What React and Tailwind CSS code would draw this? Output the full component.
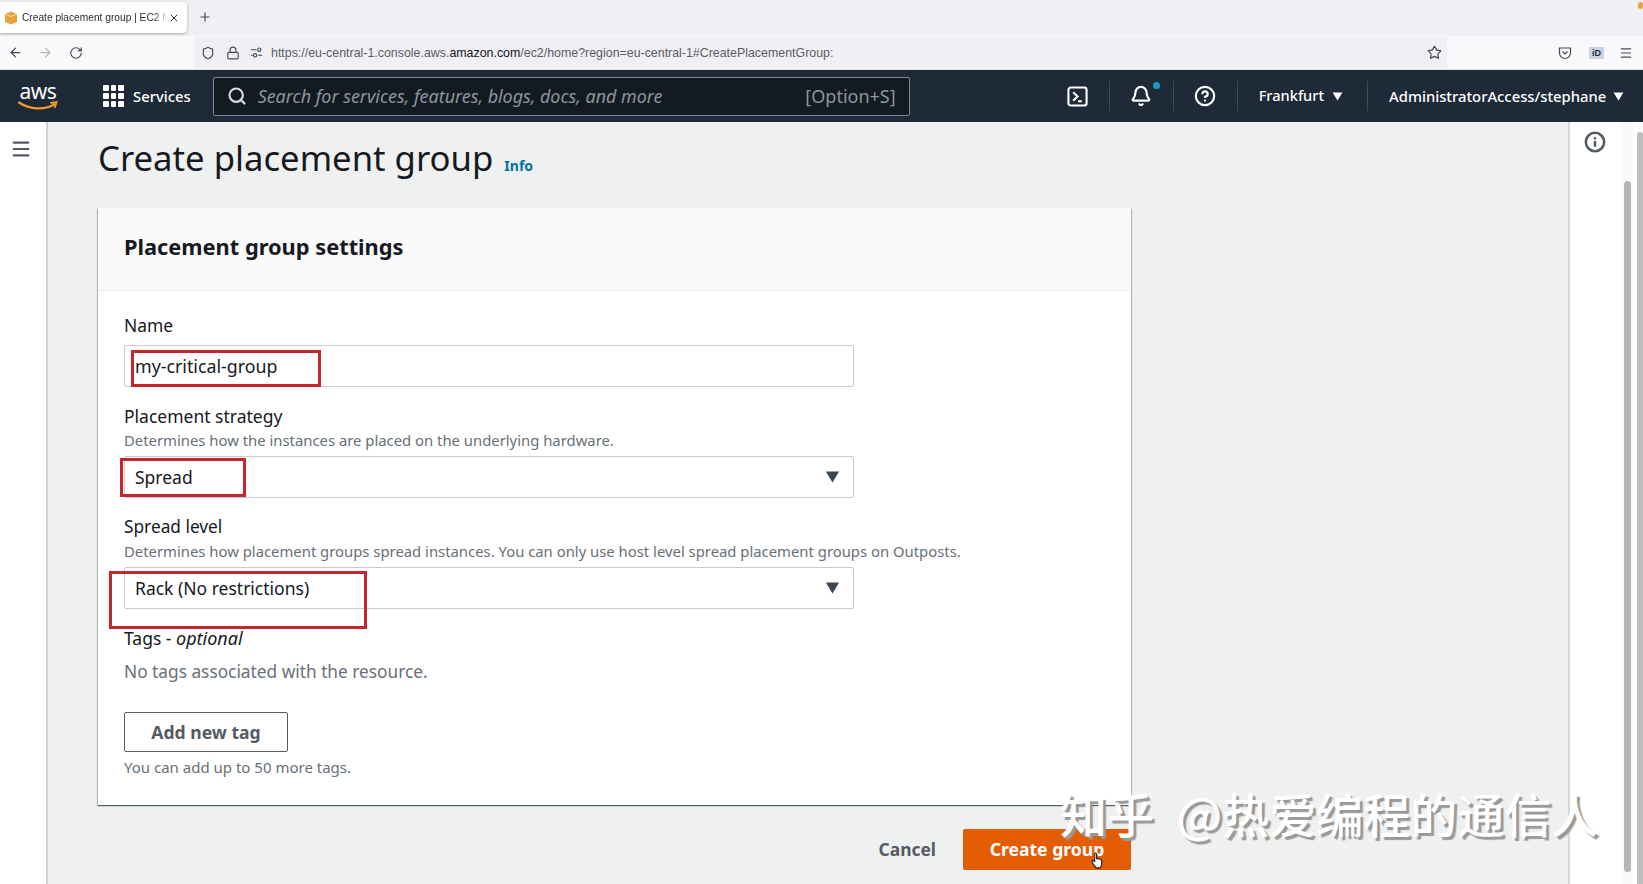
import { ArrowLeft, ArrowRight, RotateCw, Shield, Lock, Star, Search, Bell, CircleHelp, Menu, Info, Plus, X } from "lucide-react";

const Caret = ({ className }) => (
  <svg viewBox="0 0 12 10" className={className}>
    <path d="M0.5 0.5h11L6 9.5z" fill="currentColor" />
  </svg>
);

const Divider = () => <div className="w-px h-[30px] bg-[#414c59]" />;

const RedBox = ({ className }) => (
  <div className={`absolute border-[3px] border-[#c4262e] pointer-events-none ${className}`} />
);

const SelectBox = ({ value, children }) => (
  <div className="relative mt-[5px] h-[42px] border border-[#c8ccce] rounded-[2px] flex items-center justify-between pl-[10px] pr-[13px] text-[17.5px] text-[#16191f]">
    <span>{value}</span>
    <Caret className="w-[15px] h-[12px] text-[#3d4650]" />
    {children}
  </div>
);

export default function App() {
  return (
    <div className="h-screen w-full overflow-hidden flex flex-col bg-white font-['Noto_Sans',sans-serif] relative">
      {/* browser tabs */}
      <div className="h-[36px] bg-[#f0f0f4] flex items-start pt-[2px] relative">
        <div className="w-[187px] h-[31px] bg-white rounded-r-[4px] shadow-[0_1px_3px_rgba(0,0,0,0.3)] flex items-center pl-[4px] pr-[9px] font-['Liberation_Sans',sans-serif]">
          <svg viewBox="0 0 14 14" className="w-[14px] h-[14px] shrink-0">
            <path d="M1 3l6-2.500L13 3v8l-6 2.500L1 11z" fill="#e9a23b" />
            <path d="M1 3l6 2.500L13 3" fill="none" stroke="#fbe0a8" strokeWidth="1" />
          </svg>
          <span className="ml-[4px] text-[10.2px] text-[#2b2a33] whitespace-nowrap w-[146px] [mask-image:linear-gradient(to_right,black_90%,transparent)]">
            Create placement group | EC2 M
          </span>
          <X className="w-[12px] h-[12px] text-[#2b2a33] shrink-0" />
        </div>
        <Plus className="w-[14px] h-[14px] ml-[11px] mt-[8px] text-[#4a4a52]" />
        <div className="absolute right-0 top-[2px] w-[5px] h-[7px] bg-[#e8a33d] rounded-full" />
      </div>

      {/* browser address bar */}
      <div className="h-[34px] bg-[#f9f9fb] flex items-center border-b border-[#e0e0e6] relative">
        <ArrowLeft className="w-[15px] h-[15px] ml-[8px] text-[#4a4a52]" />
        <ArrowRight className="w-[15px] h-[15px] ml-[15px] text-[#b4b4ba]" />
        <RotateCw className="w-[14px] h-[14px] ml-[16px] text-[#4a4a52]" />
        <div className="absolute left-[194px] top-[1px] w-[1253px] h-[31px] bg-[#f0f0f4] flex items-center pl-[7px]">
          <Shield className="w-[14px] h-[14px] text-[#4a4a52]" />
          <Lock className="w-[14px] h-[14px] ml-[11px] text-[#4a4a52]" />
          <svg viewBox="0 0 14 14" className="w-[13px] h-[13px] ml-[10px] text-[#4a4a52]" fill="none" stroke="currentColor" strokeWidth="1.200">
            <path d="M1 4h6M1 10h2" />
            <circle cx="10" cy="4" r="1.800" />
            <circle cx="5.500" cy="10" r="1.800" />
            <path d="M9 10h4" />
          </svg>
          <span className="ml-[8px] mt-px text-[12.4px] text-[#5b5b66] whitespace-nowrap font-['Liberation_Sans',sans-serif]">
            https://eu-central-1.console.aws.<span className="text-[#15141a]">amazon.com</span>/ec2/home?region=eu-central-1#CreatePlacementGroup:
          </span>
          <Star className="w-[15px] h-[15px] ml-auto mr-[5px] text-[#4a4a52]" />
        </div>
        <div className="ml-auto flex items-center mr-[10px]">
          <svg viewBox="0 0 14 14" className="w-[14px] h-[14px] text-[#4a4a52] -translate-x-[2px]" fill="none" stroke="currentColor" strokeWidth="1.200">
            <path d="M1.500 2h11v5a5.500 5.500 0 0 1-11 0z" />
            <path d="M4.500 5.500L7 8l2.500-2.500" />
          </svg>
          <div className="ml-[15px] w-[15px] h-[12px] bg-[#c6d3e2] text-[9px] font-bold leading-[12px] text-center text-[#1f2b39] font-['Liberation_Sans',sans-serif]">iD</div>
          <Menu className="w-[14px] h-[14px] ml-[15px] text-[#4a4a52]" />
        </div>
      </div>

      {/* aws nav */}
      <div className="h-[52px] bg-[#1f2a38] flex items-center text-white shrink-0">
        <div className="ml-[18px] w-[40px] relative h-[34px] flex flex-col items-center">
          <span className="text-[21px] leading-[24px] tracking-[-0.5px]">aws</span>
          <svg viewBox="0 0 40 12" className="absolute left-0 top-[21px] w-[40px] h-[12px]">
            <path d="M1 2.500C12 10 27 10 36 4.500" fill="none" stroke="#ef9a2a" strokeWidth="2.200" strokeLinecap="round" />
            <path d="M32.500 3l6-.8-1.800 5.600" fill="none" stroke="#ef9a2a" strokeWidth="2" />
          </svg>
        </div>
        <div className="ml-[45px] grid grid-cols-3 gap-[2px] w-[21px]">
          {[1, 2, 3, 4, 5, 6, 7, 8, 9].map((n) => (
            <div key={n} className="h-[6px] bg-white rounded-[1px]" />
          ))}
        </div>
        <span className="ml-[9px] text-[14.8px] font-medium">Services</span>
        <div className="ml-[22px] w-[697px] h-[39px] bg-[#141a21] border border-[#7d8998] rounded-[2px] flex items-center pl-[13px] pr-[13px]">
          <Search className="w-[20px] h-[20px] text-[#d5dbdb]" strokeWidth={2.6} />
          <span className="ml-[11px] italic text-[17.9px] text-[#8d959f]">Search for services, features, blogs, docs, and more</span>
          <span className="ml-auto text-[18px] text-[#8d959f]">[Option+S]</span>
        </div>
        <div className="ml-[157px] flex items-center">
          <svg viewBox="0 0 22 22" className="w-[21px] h-[21px]" fill="none" stroke="white" strokeWidth="2.200">
            <rect x="1.500" y="1.500" width="19" height="19" rx="2.500" />
            <path d="M6.500 6.500L11 11l-4.500 4.500M11.500 16h4" />
          </svg>
          <div className="ml-[21px]"><Divider /></div>
          <div className="ml-[20px] relative">
            <Bell className="w-[22px] h-[22px] text-white" strokeWidth={2.4} />
            <div className="absolute -right-[8px] -top-[3px] w-[7px] h-[7px] bg-[#1c98c9] rounded-full" />
          </div>
          <div className="ml-[21px]"><Divider /></div>
          <CircleHelp className="ml-[20px] w-[22px] h-[22px] text-white" strokeWidth={2.4} />
          <div className="ml-[21px]"><Divider /></div>
          <span className="ml-[21px] text-[14.6px] font-medium">Frankfurt</span>
          <Caret className="ml-[8px] w-[11px] h-[9px] text-white" />
          <div className="ml-[24px]"><Divider /></div>
          <span className="ml-[21px] text-[14.8px] font-medium whitespace-nowrap">AdministratorAccess/stephane</span>
          <Caret className="ml-[7px] w-[11px] h-[9px] text-white" />
        </div>
      </div>

      {/* console */}
      <div className="flex-1 flex min-h-0">
        <div className="w-[48px] shrink-0 bg-white border-r-2 border-[#cfd3d3] flex justify-center pt-[16px] pr-[4px]">
          <Menu className="w-[22px] h-[22px] text-[#545b64]" strokeWidth={2.4} />
        </div>

        <div className="w-[1520px] shrink-0 bg-[#eff1f0] pl-[50px] pt-[12px]">
          <div className="flex items-baseline h-[48px]">
            <h1 className="text-[34.7px] leading-[48px] text-[#16191f] whitespace-nowrap">Create placement group</h1>
            <a className="ml-[11px] text-[14px] font-bold text-[#0073a8]">Info</a>
          </div>

          <div className="mt-[26px] w-[1033px] bg-white shadow-[0_1px_1px_0_rgba(0,28,36,0.5),1px_1px_1px_0_rgba(0,28,36,0.2),-1px_1px_1px_0_rgba(0,28,36,0.2)]">
            <div className="h-[83px] bg-[#fafafa] border-b border-[#eaeded] flex items-center px-[26px] pb-[3px]">
              <h2 className="text-[21.8px] font-bold text-[#16191f]">Placement group settings</h2>
            </div>
            <div className="px-[26px] pt-[22px] pb-[28px] w-[782px]">
              <div className="text-[17.4px] leading-[24px] text-[#16191f]">Name</div>
              <div className="relative mt-[8px] h-[42px] border border-[#c8ccce] rounded-[2px] flex items-center pl-[10px] text-[17.8px] text-[#16191f]">
                my-critical-group
                <RedBox className="left-[6px] top-[4px] w-[190px] h-[37px]" />
              </div>

              <div className="mt-[17px] text-[17.5px] leading-[24px] text-[#16191f]">Placement strategy</div>
              <div className="mt-px text-[14.85px] leading-[22px] text-[#687078] whitespace-nowrap">Determines how the instances are placed on the underlying hardware.</div>
              <SelectBox value="Spread">
                <RedBox className="-left-[5px] top-[1px] w-[126px] h-[39px]" />
              </SelectBox>

              <div className="mt-[17px] text-[17.3px] leading-[24px] text-[#16191f]">Spread level</div>
              <div className="mt-px text-[14.85px] leading-[22px] text-[#687078] whitespace-nowrap">Determines how placement groups spread instances. You can only use host level spread placement groups on Outposts.</div>
              <SelectBox value="Rack (No restrictions)">
                <RedBox className="-left-[16px] top-[3px] w-[258px] h-[58px]" />
              </SelectBox>

              <div className="mt-[17px] text-[17.5px] leading-[24px] text-[#16191f]">Tags - <i className="text-[18px]">optional</i></div>
              <div className="mt-[10px] text-[17.3px] leading-[24px] text-[#687078]">No tags associated with the resource.</div>
              <button className="mt-[28px] w-[164px] h-[40px] border border-[#545b64] rounded-[2px] text-[17.6px] font-bold text-[#545b64] flex items-center justify-center">Add new tag</button>
              <div className="mt-[5px] text-[15px] leading-[20px] text-[#687078]">You can add up to 50 more tags.</div>
            </div>
          </div>

          <div className="mt-[24px] w-[1033px] flex justify-end items-center">
            <span className="text-[17.4px] font-bold text-[#545b64]">Cancel</span>
            <button className="ml-[27px] w-[168px] h-[41px] bg-[#e45c04] rounded-[2px] text-[17.6px] font-bold text-white relative">
              Create group
              <svg viewBox="0 0 14 18" className="absolute left-[128px] top-[23px] w-[13px] h-[17px]">
                <path d="M4 1.500c.8-.8 2-.4 2 .8V7l1-.3 1 .3 1.200.2 1.500.8.800 1v4.500L10 17H5.500L2 12 1 9.500l1-.8L4 10z" fill="white" stroke="#222" strokeWidth="1.200" />
              </svg>
            </button>
          </div>
        </div>

        <div className="w-[53px] shrink-0 bg-white border-l-2 border-[#d5d8d8] flex justify-center pt-[9px] pr-px">
          <Info className="w-[22px] h-[22px] text-[#545b64]" strokeWidth={2.8} />
        </div>

        <div className="flex-1 bg-[#fafafa] relative">
          <div className="absolute left-[3px] top-[59px] w-[7px] h-[691px] bg-[#b5b5b5] rounded-full" />
          <div className="absolute left-[13px] top-0 bottom-0 w-[3px] bg-white" />
          <div className="absolute right-0 top-[10px] bottom-0 w-[6px] bg-[#bdbdbd] rounded-t-full" />
        </div>
      </div>

      {/* watermark */}
      <div className="absolute left-[1060px] top-[783px] text-[47px] leading-[60px] font-medium text-white whitespace-nowrap font-['Noto_Sans_CJK_SC',sans-serif] [word-spacing:12px] [text-shadow:3px_3px_1px_#999]">
        知乎 @热爱编程的通信人
      </div>
    </div>
  );
}
